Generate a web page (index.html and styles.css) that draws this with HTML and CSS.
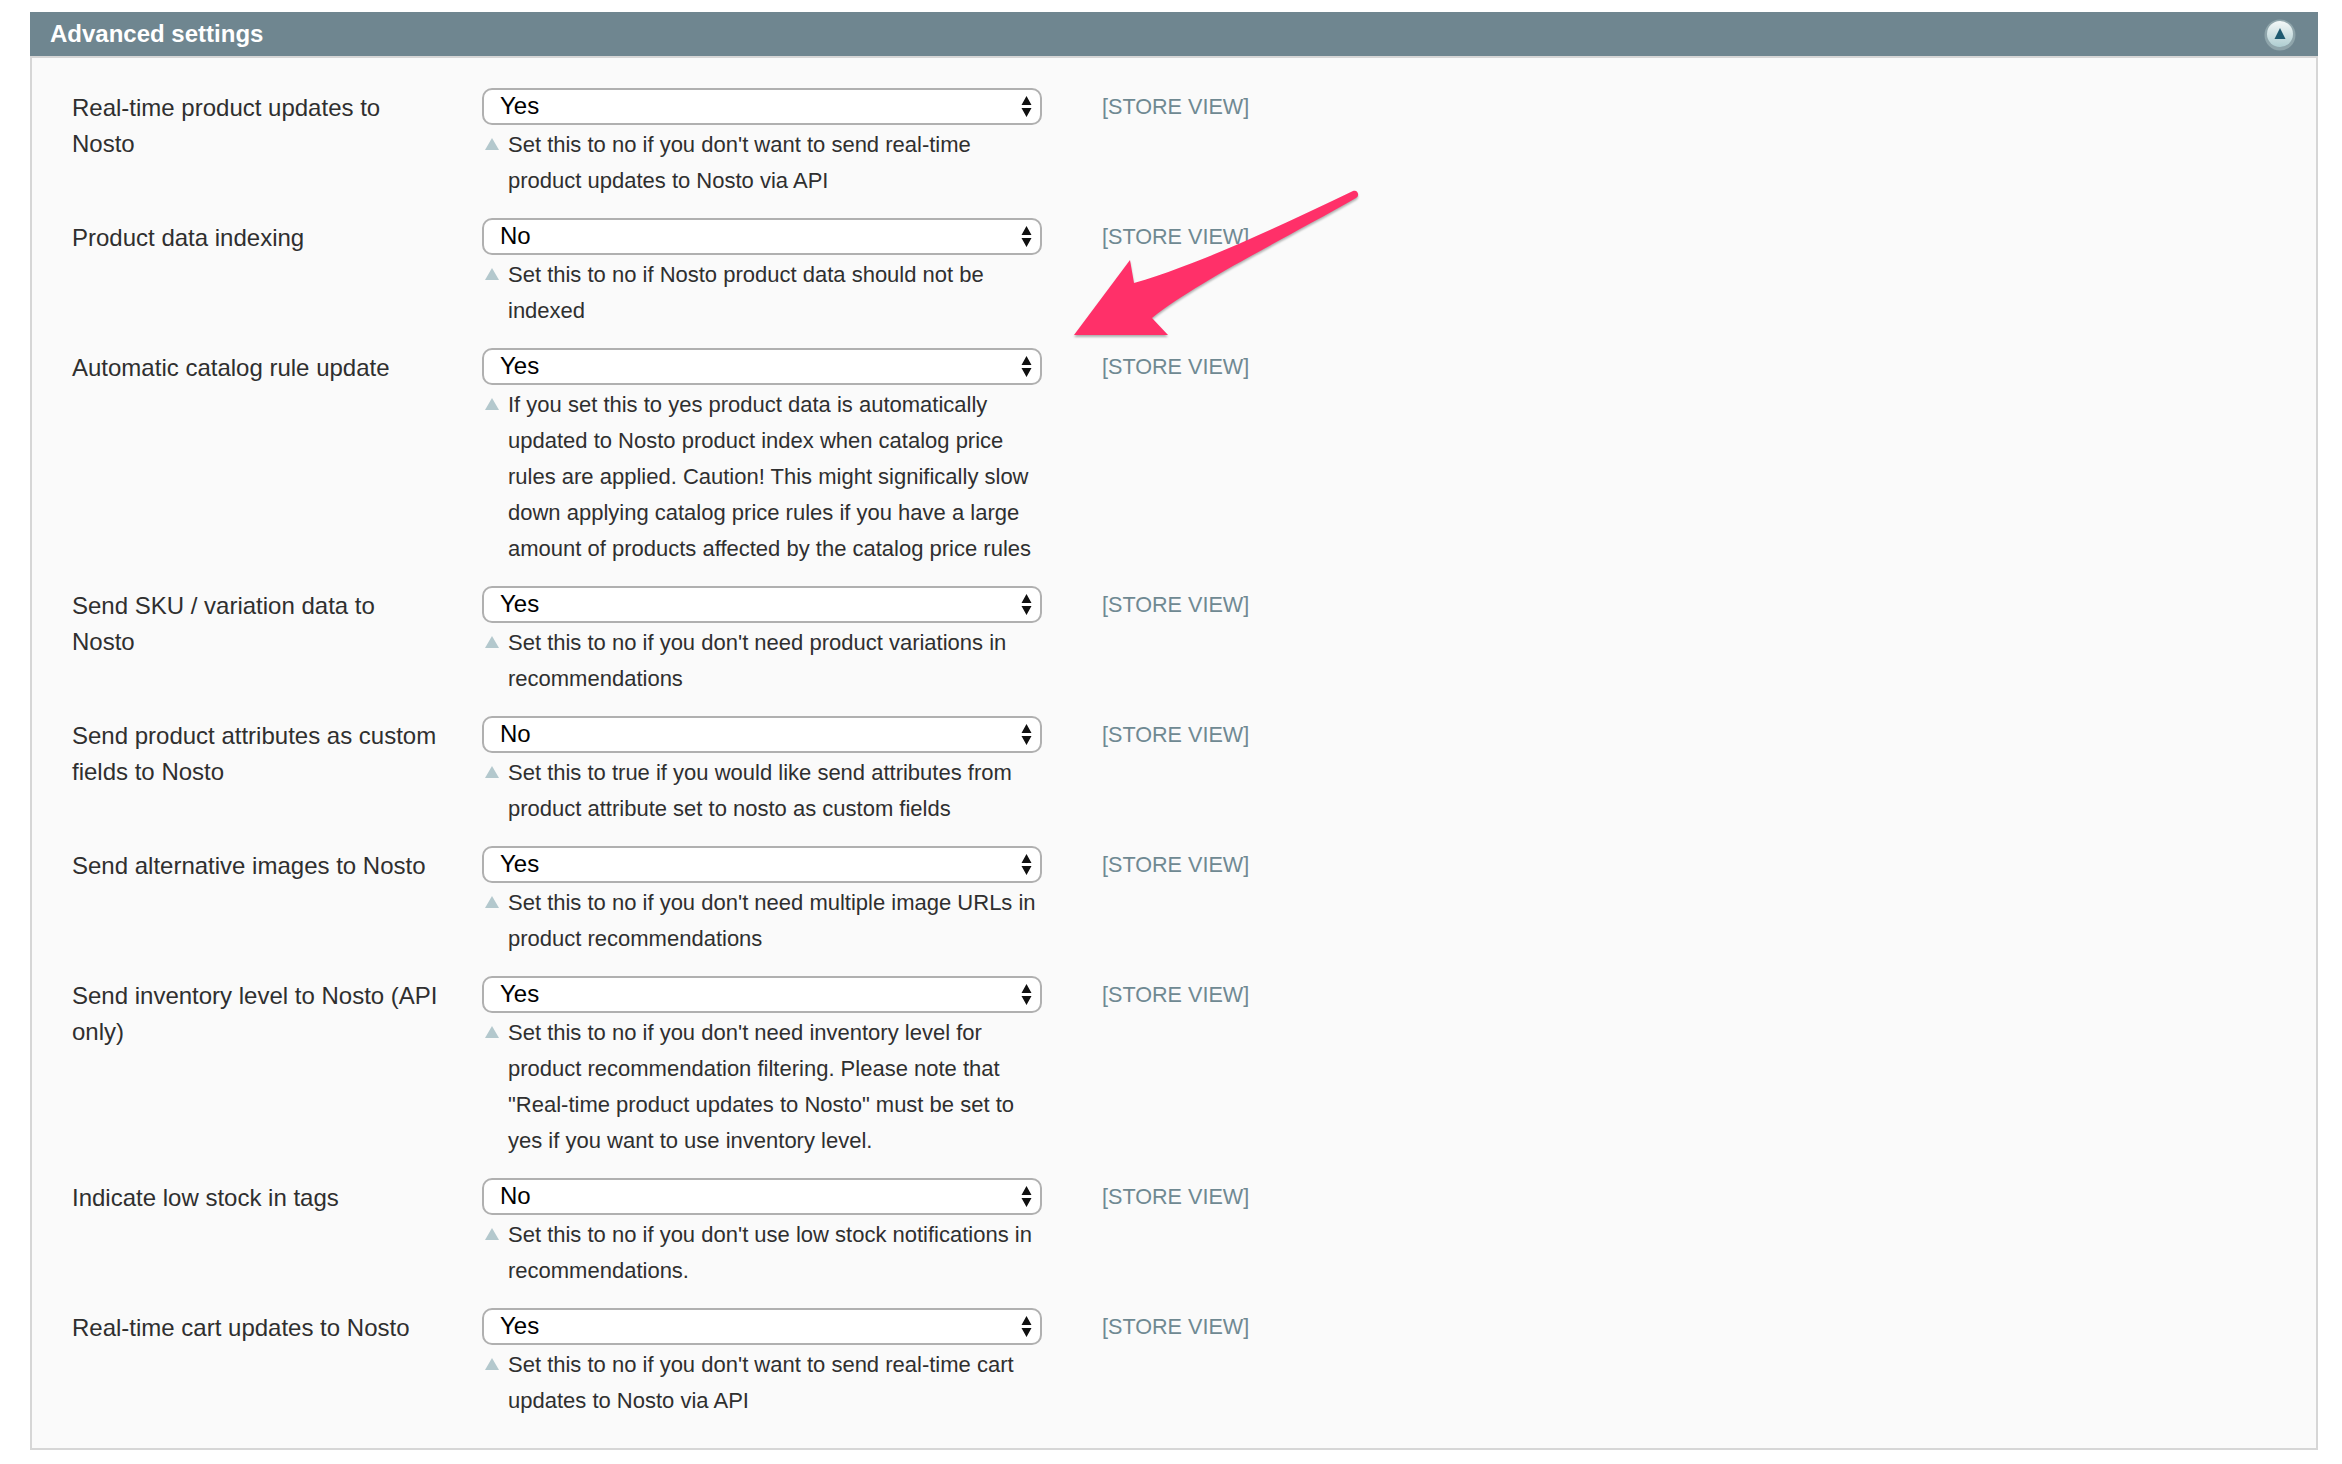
FILE: index.html
```html
<!DOCTYPE html>
<html lang="en">
<head>
    <meta charset="UTF-8">
    <title>Advanced settings</title>
    <link rel="stylesheet" href="styles.css">
</head>
<body>
    <div class="section">
        <div class="section-head">
            <span>Advanced settings</span>
            <span class="collapse-btn"><svg width="32" height="34" viewBox="0 0 32 34">
                <defs>
                    <linearGradient id="knob" x1="0" y1="0" x2="0" y2="1">
                        <stop offset="0" stop-color="#f4f8f8"/>
                        <stop offset="1" stop-color="#aecdd1"/>
                    </linearGradient>
                </defs>
                <circle cx="16" cy="18" r="15.5" fill="#8fa5ab"/>
                <circle cx="16" cy="17" r="13" fill="url(#knob)"/>
                <path d="M16 11 L21.500 22 H10.500 Z" fill="#1f5a70"/>
            </svg></span>
        </div>
        <div class="section-body">
            <svg class="arrow" width="300" height="160" viewBox="1070 185 300 160">
                <path d="M1074 335 L1130 260 L1134 283 C1200 264 1280 226 1353 191 C1358 189 1360 196 1356 198 C1290 236 1200 280 1152 318 L1168 335 Z" fill="#ff3069"/>
            </svg>

            <div class="row">
                <label class="field-label">Real-time product updates to<br>Nosto</label>
                <div class="field-value">
                    <select><option>Yes</option><option>No</option></select>
                    <p class="hint"><span class="hint-mark"></span><span>Set this to no if you don't want to send real-time<br>product updates to Nosto via API</span></p>
                </div>
                <div class="scope">[STORE VIEW]</div>
            </div>
            <div class="row">
                <label class="field-label">Product data indexing</label>
                <div class="field-value">
                    <select><option>No</option><option>Yes</option></select>
                    <p class="hint"><span class="hint-mark"></span><span>Set this to no if Nosto product data should not be<br>indexed</span></p>
                </div>
                <div class="scope">[STORE VIEW]</div>
            </div>
            <div class="row">
                <label class="field-label">Automatic catalog rule update</label>
                <div class="field-value">
                    <select><option>Yes</option><option>No</option></select>
                    <p class="hint"><span class="hint-mark"></span><span>If you set this to yes product data is automatically<br>updated to Nosto product index when catalog price<br>rules are applied. Caution! This might significally slow<br>down applying catalog price rules if you have a large<br>amount of products affected by the catalog price rules</span></p>
                </div>
                <div class="scope">[STORE VIEW]</div>
            </div>
            <div class="row">
                <label class="field-label">Send SKU / variation data to<br>Nosto</label>
                <div class="field-value">
                    <select><option>Yes</option><option>No</option></select>
                    <p class="hint"><span class="hint-mark"></span><span>Set this to no if you don't need product variations in<br>recommendations</span></p>
                </div>
                <div class="scope">[STORE VIEW]</div>
            </div>
            <div class="row">
                <label class="field-label">Send product attributes as custom<br>fields to Nosto</label>
                <div class="field-value">
                    <select><option>No</option><option>Yes</option></select>
                    <p class="hint"><span class="hint-mark"></span><span>Set this to true if you would like send attributes from<br>product attribute set to nosto as custom fields</span></p>
                </div>
                <div class="scope">[STORE VIEW]</div>
            </div>
            <div class="row">
                <label class="field-label">Send alternative images to Nosto</label>
                <div class="field-value">
                    <select><option>Yes</option><option>No</option></select>
                    <p class="hint"><span class="hint-mark"></span><span>Set this to no if you don't need multiple image URLs in<br>product recommendations</span></p>
                </div>
                <div class="scope">[STORE VIEW]</div>
            </div>
            <div class="row">
                <label class="field-label">Send inventory level to Nosto (API<br>only)</label>
                <div class="field-value">
                    <select><option>Yes</option><option>No</option></select>
                    <p class="hint"><span class="hint-mark"></span><span>Set this to no if you don't need inventory level for<br>product recommendation filtering. Please note that<br>"Real-time product updates to Nosto" must be set to<br>yes if you want to use inventory level.</span></p>
                </div>
                <div class="scope">[STORE VIEW]</div>
            </div>
            <div class="row">
                <label class="field-label">Indicate low stock in tags</label>
                <div class="field-value">
                    <select><option>No</option><option>Yes</option></select>
                    <p class="hint"><span class="hint-mark"></span><span>Set this to no if you don't use low stock notifications in<br>recommendations.</span></p>
                </div>
                <div class="scope">[STORE VIEW]</div>
            </div>
            <div class="row">
                <label class="field-label">Real-time cart updates to Nosto</label>
                <div class="field-value">
                    <select><option>Yes</option><option>No</option></select>
                    <p class="hint"><span class="hint-mark"></span><span>Set this to no if you don't want to send real-time cart<br>updates to Nosto via API</span></p>
                </div>
                <div class="scope">[STORE VIEW]</div>
            </div>
        </div>
    </div>
</body>
</html>
```
FILE: styles.css
```css
body {
    margin: 0;
    padding: 12px 24px 14px 30px;
    background-color: #fff;
    font-family: "Liberation Sans", Arial, sans-serif;
    color: #2f2f2f;
}
.section-head {
    display: flex;
    justify-content: space-between;
    align-items: center;
    height: 44px;
    padding: 0 22px 0 20px;
    background-color: #6f8690;
    color: #fff;
    font-size: 24px;
    font-weight: bold;
}
.collapse-btn {
    display: flex;
}
.section-body {
    position: relative;
    height: 1394px;
    box-sizing: border-box;
    padding: 30px 0 0 40px;
    background-color: #fafafa;
    border: solid #d6d6d6;
    border-width: 2px;
}
.arrow {
    position: absolute;
    left: 1038px;
    top: 127px;
    filter: drop-shadow(0 2px 1px rgba(0, 0, 0, 0.3));
}
.row {
    display: flex;
    padding-bottom: 19px;
}
.field-label {
    flex: none;
    width: 410px;
    padding-top: 2px;
    font-size: 24px;
    line-height: 36px;
}
.field-value {
    flex: none;
    width: 560px;
}
select {
    display: block;
    width: 560px;
    height: 37px;
    padding: 0 0 2px 16px;
    border: 2px solid #b0b0b0;
    border-radius: 10px;
    background-color: #fff;
    background-image: url("data:image/svg+xml,%3Csvg xmlns='http://www.w3.org/2000/svg' width='11' height='21'%3E%3Cpath d='M5.500 0l5 9h-10zM5.500 21l5-9h-10z' fill='%23111'/%3E%3C/svg%3E");
    background-repeat: no-repeat;
    background-position: right 8px center;
    appearance: none;
    font-family: inherit;
    font-size: 24px;
    color: #000;
}
.hint {
    display: flex;
    margin: 2px 0 0;
    font-size: 22px;
    line-height: 36px;
}
.hint-mark {
    flex: none;
    width: 0;
    height: 0;
    margin: 11px 9px 0 3px;
    border-left: 7px solid transparent;
    border-right: 7px solid transparent;
    border-bottom: 12px solid #b3c8cd;
}
.scope {
    margin-left: 60px;
    padding-top: 1px;
    font-size: 21.6px;
    line-height: 36px;
    color: #6f8992;
}
```
